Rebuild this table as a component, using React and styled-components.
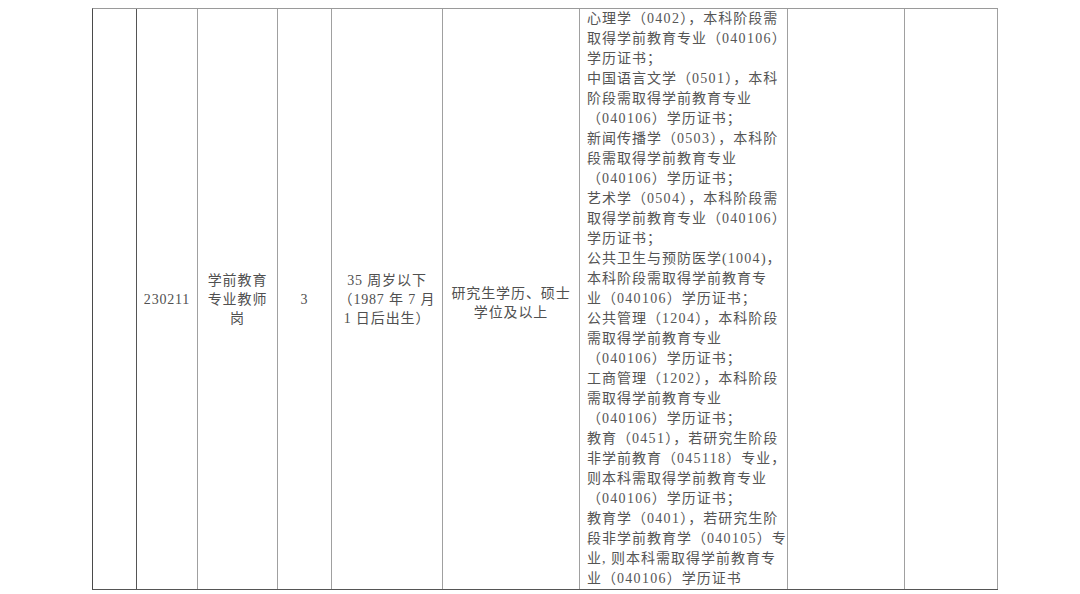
import React from "react";
import styled, { createGlobalStyle } from "styled-components";

const Global = createGlobalStyle`
  html, body { margin: 0; padding: 0; background: #fff; }
  body {
    font-family: "Liberation Serif", "Noto Sans CJK SC", serif;
    color: #505050;
  }
`;

const Page = styled.div`
  width: 1080px;
  height: 594px;
  box-sizing: border-box;
  padding: 8px 0 0 92px;
  background: #fff;
  overflow: hidden;
`;

const Table = styled.div`
  display: grid;
  grid-template-columns: 44px 61px 80px 54px 111px 137px 208px 117px 93px;
  width: max-content;
  border-top: 1px solid #9a9a9a;
  border-bottom: 1px solid #555;
  border-left: 1px solid #4a4a4a;
`;

const Cell = styled.div`
  box-sizing: border-box;
  border-right: 1px solid ${(p) => (p.$dark ? "#555" : "#a0a0a0")};
  display: flex;
  flex-direction: column;
  justify-content: center;
  align-items: center;
  text-align: center;
  font-size: 14px;
  line-height: 19px;
  letter-spacing: 0.9px;
  padding-top: ${(p) => p.$shift || 0}px;
`;

const Line = styled.span`
  display: block;
  white-space: nowrap;
`;

const LongCell = styled.div`
  box-sizing: border-box;
  border-right: 1px solid #a0a0a0;
  padding: 0 0 0 7px;
  font-size: 14px;
  line-height: 20px;
  letter-spacing: 1px;
  color: #555;
`;

const Digits = styled.span`
  letter-spacing: ${(p) => (p.$wide ? "1.3px" : "0.8px")};
`;

const withDigits = (text, wide) =>
  text.split(/(\d+)/).map((part, i) =>
    /^\d+$/.test(part) ? (
      <Digits key={i} $wide={wide}>
        {part}
      </Digits>
    ) : (
      <React.Fragment key={i}>{part}</React.Fragment>
    )
  );

const majorLines = [
  "心理学（0402），本科阶段需",
  "取得学前教育专业（040106）",
  "学历证书；",
  "中国语言文学（0501），本科",
  "阶段需取得学前教育专业",
  "（040106）学历证书；",
  "新闻传播学（0503），本科阶",
  "段需取得学前教育专业",
  "（040106）学历证书；",
  "艺术学（0504），本科阶段需",
  "取得学前教育专业（040106）",
  "学历证书；",
  "公共卫生与预防医学(1004)，",
  "本科阶段需取得学前教育专",
  "业（040106）学历证书；",
  "公共管理（1204），本科阶段",
  "需取得学前教育专业",
  "（040106）学历证书；",
  "工商管理（1202），本科阶段",
  "需取得学前教育专业",
  "（040106）学历证书；",
  "教育（0451），若研究生阶段",
  "非学前教育（045118）专业，",
  "则本科需取得学前教育专业",
  "（040106）学历证书；",
  "教育学（0401），若研究生阶",
  "段非学前教育学（040105）专",
  "业, 则本科需取得学前教育专",
  "业（040106）学历证书",
];

const cells = [
  { lines: [], dark: true },
  { lines: ["230211"] },
  { lines: ["学前教育", "专业教师", "岗"] },
  { lines: ["3"] },
  { lines: ["35 周岁以下", "（1987 年 7 月", "1 日后出生）"] },
  { lines: ["研究生学历、硕士", "学位及以上"], shift: 8 },
];

export default function App() {
  return (
    <>
      <Global />
      <Page>
        <Table>
          {cells.map((c, i) => (
            <Cell key={i} $dark={c.dark} $shift={c.shift}>
              {c.lines.map((l, j) => (
                <Line key={j}>{withDigits(l, false)}</Line>
              ))}
            </Cell>
          ))}
          <LongCell>
            {majorLines.map((l, j) => (
              <Line key={j}>{withDigits(l, true)}</Line>
            ))}
          </LongCell>
          <Cell />
          <Cell />
        </Table>
      </Page>
    </>
  );
}
